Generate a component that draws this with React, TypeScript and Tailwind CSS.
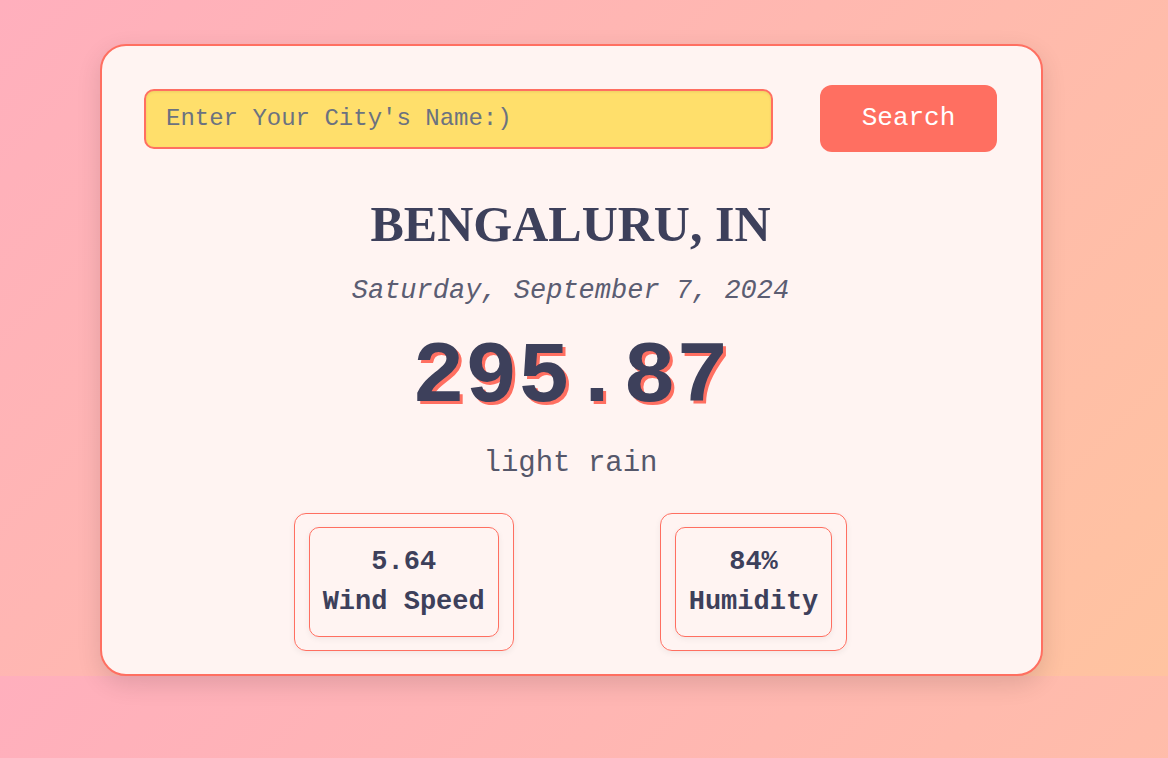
import { useState } from "react";

function StatBox({ value, label }: { value: string; label: string }) {
  return (
    <div className="rounded-[12px] border border-[#ff6f61] px-[14px] py-[13px] shadow-[0_2px_6px_rgba(0,0,0,0.06)]">
      <div className="rounded-[10px] border border-[#ff6f61] px-[13px] py-[14px] text-center font-bold text-[27px] leading-[40px] text-[#3d405b] shadow-[0_2px_6px_rgba(0,0,0,0.06)]">
        <p>{value}</p>
        <p>{label}</p>
      </div>
    </div>
  );
}

function App() {
  const [city, setCity] = useState("");

  return (
    <div
      className="min-h-screen bg-[linear-gradient(135deg,#ffafbd,#ffc3a0)] bg-[length:100%_676px] bg-repeat pt-[44px] pl-[100px]"
      style={{ fontFamily: '"Liberation Mono", "Courier New", monospace' }}
    >
      <div className="w-[943px] rounded-[26px] border-2 border-[#ff6f61] bg-[#fff4f2] pt-[39px] pb-[23px] pl-[42px] pr-[44px] shadow-[0_8px_24px_rgba(0,0,0,0.12)]">
        <div className="flex items-center justify-between">
          <input
            type="text"
            value={city}
            onChange={(e) => setCity(e.target.value)}
            placeholder="Enter Your City's Name:)"
            className="h-[60px] w-[629px] rounded-[10px] border-2 border-[#ff6f61] bg-[#ffdf6b] px-[20px] text-[24px] text-[#3d405b] outline-none placeholder:text-[#6b7280] shadow-[inset_0_1px_3px_rgba(0,0,0,0.08)]"
          />
          <button className="h-[67px] w-[177px] rounded-[12px] bg-[#ff6f61] text-[26px] text-white">
            Search
          </button>
        </div>

        <div className="mt-[42px] flex flex-col items-center text-center">
          <h1
            className="text-[50px] font-bold leading-[60px] text-[#3d405b]"
            style={{ fontFamily: '"Liberation Serif", "Times New Roman", serif' }}
          >
            BENGALURU, IN
          </h1>
          <p className="mt-[21px] text-[27px] italic leading-[32px] text-[#5b5d72]">
            Saturday, September 7, 2024
          </p>
          <p className="mt-[18px] text-[88px] font-bold leading-[106px] text-[#3d405b] [text-shadow:3px_3px_0_#ff6f61]">
            295.87
          </p>
          <p className="mt-[15px] text-[29px] leading-[35px] text-[#55576a]">light rain</p>
        </div>

        <div className="mt-[32px] flex justify-center gap-[146px]">
          <StatBox value="5.64" label="Wind Speed" />
          <StatBox value="84%" label="Humidity" />
        </div>
      </div>
    </div>
  );
}

export default App;
